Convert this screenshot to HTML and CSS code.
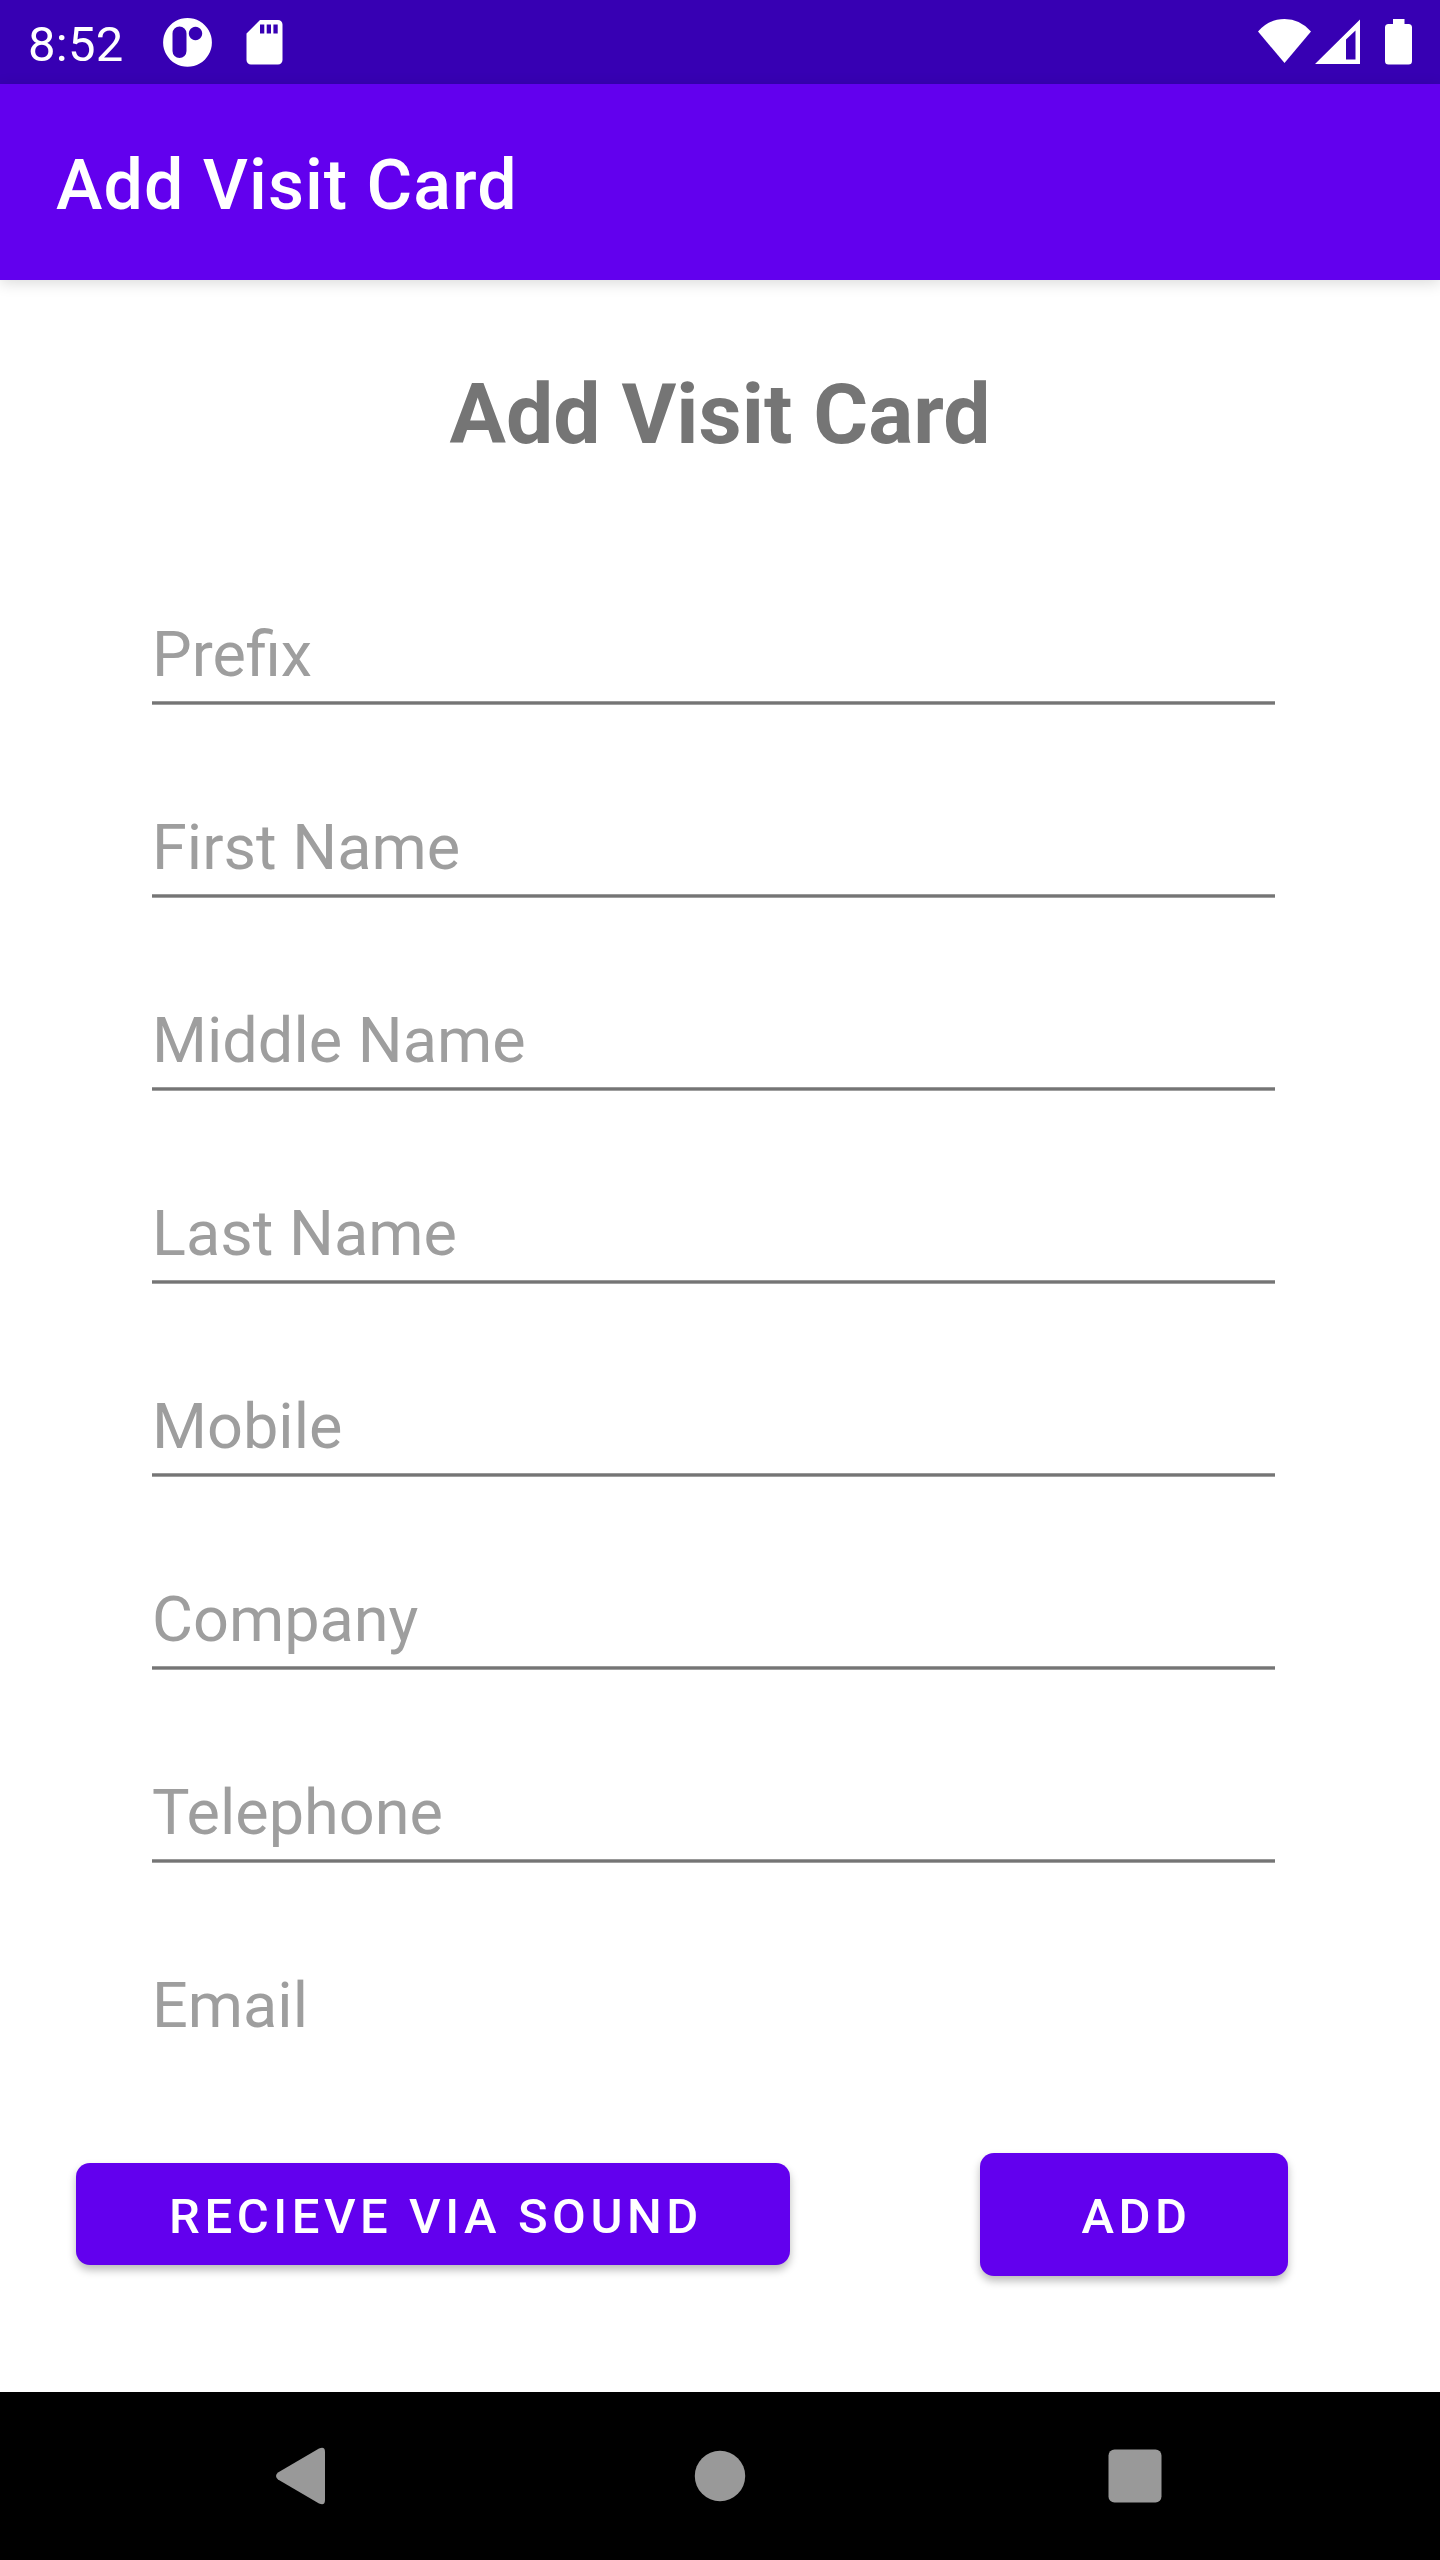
FILE: index.html
```html
<!DOCTYPE html>
<html lang="en">
<head>
<meta charset="utf-8">
<title>Add Visit Card</title>
<link rel="stylesheet" href="styles.css">
</head>
<body>
<div class="screen">
  <div class="status-bar">
    <span class="clock">8:52</span>
    <svg class="status-left" width="130" height="84" viewBox="160 0 130 84" fill="#fff">
      <path fill-rule="evenodd" d="M187.500 18a24.400 24.400 0 1 0 .01 0zM172.500 33.500a7 7 0 0 1 14 0V51a7 7 0 0 1-14 0zM195.500 26.800a6.700 6.700 0 1 0 .01 0z"/>
      <path fill-rule="evenodd" d="M260 20h18a4.500 4.500 0 0 1 4.500 4.500V60a4.500 4.500 0 0 1-4.500 4.500H251a4.500 4.500 0 0 1-4.500-4.500V33.500zM260 24.500v9h4.300v-9zM266.700 24.500v9h4.300v-9zM273.400 24.500v9h4.300v-9z"/>
    </svg>
    <svg class="status-right" width="190" height="84" viewBox="1250 0 190 84" fill="#fff">
      <path d="M1258 31.500Q1269 19 1284.500 19T1311 31.500L1284.500 63z"/>
      <path fill-rule="evenodd" d="M1360 19.500V64h-45zM1355.500 30.500L1346 39.500V59.500h9.500z"/>
      <path d="M1393 19h11.500v5h4a3.500 3.500 0 0 1 3.500 3.500V61a3.500 3.500 0 0 1-3.500 3.500h-20a3.500 3.500 0 0 1-3.500-3.500V27.500a3.500 3.500 0 0 1 3.500-3.500h4.500z"/>
    </svg>
  </div>
  <header class="app-bar"><span class="app-title">Add Visit Card</span></header>
  <main class="content">
    <h1 class="heading">Add Visit Card</h1>
    <div class="fields">
      <div class="field">Prefix</div>
      <div class="field">First Name</div>
      <div class="field">Middle Name</div>
      <div class="field">Last Name</div>
      <div class="field">Mobile</div>
      <div class="field">Company</div>
      <div class="field">Telephone</div>
      <div class="field field-last">Email</div>
    </div>
    <div class="actions">
      <button class="btn btn-receive" type="button">RECIEVE VIA SOUND</button>
      <button class="btn btn-add" type="button">ADD</button>
    </div>
  </main>
  <nav class="nav-bar">
    <svg width="1440" height="168" viewBox="0 0 1440 168" fill="#999">
      <path d="M278 80.500L319 56.600Q325 54 325 60V108Q325 114 319 111.400L278 87.500Q274 84 278 80.500z"/>
      <ellipse cx="720" cy="84" rx="25.200" ry="25.200"/>
      <rect x="1108.500" y="57.500" width="53" height="53" rx="6"/>
    </svg>
  </nav>
</div>
</body>
</html>
```
FILE: styles.css
```css
* { box-sizing: border-box; }
body { margin: 0; background: #fff; font-family: Roboto, "Liberation Sans", sans-serif; }
.screen { width: 1440px; height: 2560px; display: flex; flex-direction: column; overflow: hidden; }
svg { display: block; }
.status-bar { height: 84px; background: #3700b3; color: #fff; display: flex; align-items: center; }
.clock { width: 132px; padding: 5px 0 0 28px; font-size: 49px; line-height: 58px; letter-spacing: .3px; white-space: nowrap; }
.status-left { margin-left: 28px; }
.status-right { margin-left: auto; }
.app-bar { height: 196px; background: #6200ee; color: #fff; display: flex; align-items: center; padding: 6px 56px 0; box-shadow: 0 3px 14px rgba(0, 0, 0, .15); }
.app-title { font-size: 70px; font-weight: 500; line-height: 82px; letter-spacing: 1.03px; }
.content { height: 2112px; display: flex; flex-direction: column; }
.heading { margin: 86px 0 0; height: 98px; font-size: 84px; font-weight: 700; line-height: 98px; text-align: center; color: #757575; }
.fields { margin: 119px 165px 0 152px; display: flex; flex-direction: column; gap: 71px; }
.field { height: 122px; padding: 35px 0 0; font-size: 63px; line-height: 74px; color: #9e9e9e; background: linear-gradient(#999 0 1px, #757575 1px 3px, #a0a0a0 3px 4px) bottom / 100% 4px no-repeat; }
.field-last { background: none; }
.actions { display: flex; align-items: flex-start; margin: 97px 0 0 76px; gap: 190px; height: 123px; }
.btn { border: 0; padding: 5px 0 0 6px; border-radius: 14px; background: #6200ee; color: #fff; font-family: inherit; font-size: 49px; font-weight: 500; letter-spacing: 4.55px; line-height: 58px; white-space: nowrap; box-shadow: 0 5px 9px rgba(0, 0, 0, .27); }
.btn-receive { width: 714px; height: 102px; margin-top: 10px; }
.btn-add { width: 308px; height: 123px; padding: 5px 0 0 5px; }
.nav-bar { height: 168px; background: #000; }
```
